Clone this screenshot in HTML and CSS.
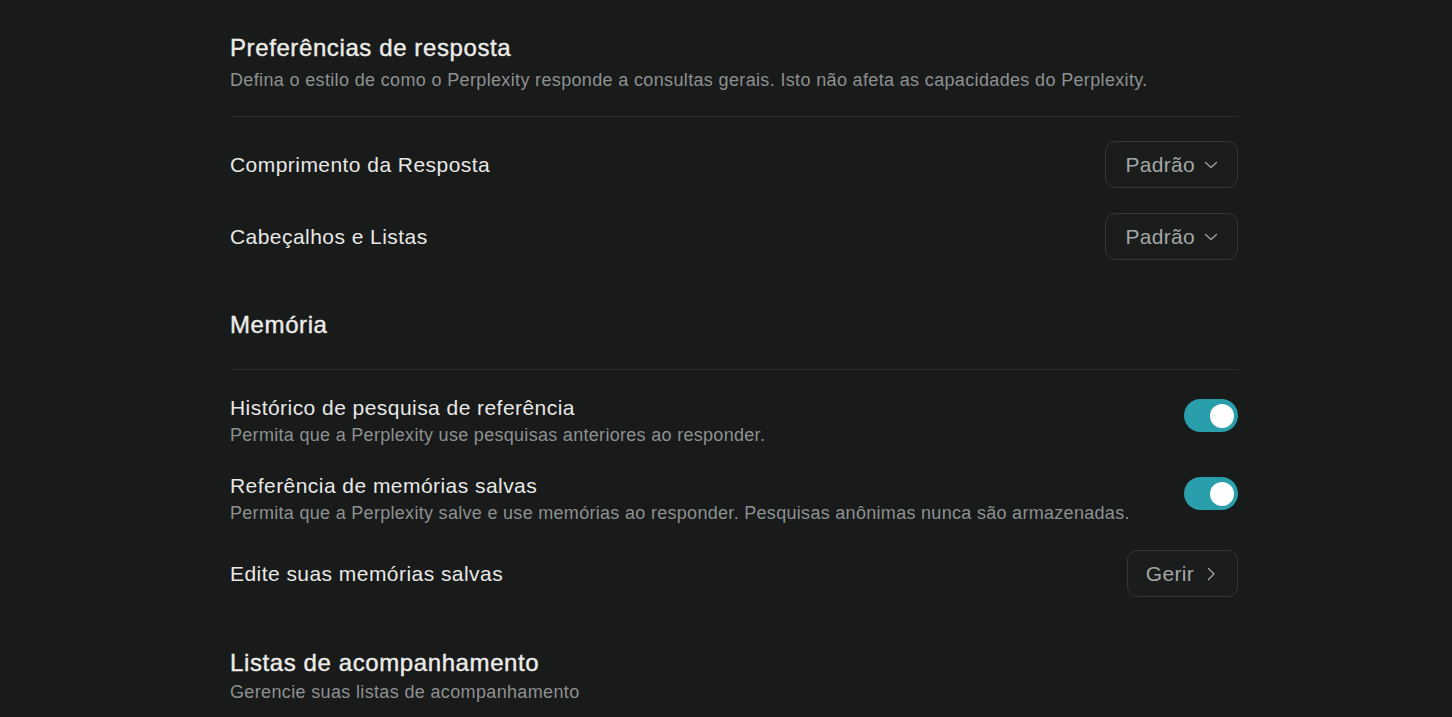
FILE: index.html
```html
<!DOCTYPE html>
<html lang="pt">
<head>
<meta charset="utf-8">
<title>Configurações</title>
<link rel="stylesheet" href="styles.css">
</head>
<body>
<div id="contents">

  <div class="section-head">
    <h2 class="section-title">Preferências de resposta</h2>
    <p class="section-desc">Defina o estilo de como o Perplexity responde a consultas gerais. Isto não afeta as capacidades do Perplexity.</p>
  </div>
  <hr class="divider">

  <div class="row">
    <div class="row-label">Comprimento da Resposta</div>
    <button class="pill">Padrão
      <svg class="chev" viewBox="0 0 14 14" width="14" height="14"><path d="M1.5 4.5l5.5 5 5.5-5" fill="none" stroke="currentColor" stroke-width="1.2" stroke-linecap="round" stroke-linejoin="round"/></svg>
    </button>
  </div>
  <div class="row">
    <div class="row-label">Cabeçalhos e Listas</div>
    <button class="pill">Padrão
      <svg class="chev" viewBox="0 0 14 14" width="14" height="14"><path d="M1.5 4.5l5.5 5 5.5-5" fill="none" stroke="currentColor" stroke-width="1.2" stroke-linecap="round" stroke-linejoin="round"/></svg>
    </button>
  </div>

  <div class="section-head mem-head">
    <h2 class="section-title">Memória</h2>
  </div>
  <hr class="divider divider-mem">

  <div class="row row-toggle">
    <div class="row-text">
      <div class="row-label">Histórico de pesquisa de referência</div>
      <div class="row-desc">Permita que a Perplexity use pesquisas anteriores ao responder.</div>
    </div>
    <span class="toggle"><span class="knob"></span></span>
  </div>
  <div class="row row-toggle row-toggle-last">
    <div class="row-text">
      <div class="row-label">Referência de memórias salvas</div>
      <div class="row-desc">Permita que a Perplexity salve e use memórias ao responder. Pesquisas anônimas nunca são armazenadas.</div>
    </div>
    <span class="toggle"><span class="knob"></span></span>
  </div>
  <div class="row">
    <div class="row-label">Edite suas memórias salvas</div>
    <button class="pill pill-manage">Gerir
      <svg class="chev" viewBox="0 0 16 16" width="16" height="16"><path d="M5.5 2.5l5.5 5.5-5.5 5.5" fill="none" stroke="currentColor" stroke-width="1.3" stroke-linecap="round" stroke-linejoin="round"/></svg>
    </button>
  </div>

  <div class="section-head lists-head">
    <h2 class="section-title">Listas de acompanhamento</h2>
    <p class="section-desc">Gerencie suas listas de acompanhamento</p>
  </div>

</div>
</body>
</html>
```

FILE: styles.css
```css
html, body {
	margin: 0;
	background: #191a1a;
	height: 100%;
	overflow: hidden;
}
body {
	font-family: "Liberation Sans", Arial, sans-serif;
	color: #e8e8e6;
}
#contents {
	width: 1008px;
	margin-left: 230px;
	padding-top: 33px;
}
.section-head {
	display: flex;
	flex-direction: column;
	gap: 6px;
}
.section-title {
	margin: 0;
	font-size: 24px;
	font-weight: normal;
	letter-spacing: 0.6px;
	line-height: 30px;
	color: #ecece9;
	-webkit-text-stroke: 0.4px #ecece9;
}
.section-desc {
	margin: 0;
	font-size: 18px;
	letter-spacing: 0.35px;
	line-height: 22px;
	color: #8d9191;
}
.divider {
	border: 0;
	border-top: 1px solid #2a2c2c;
	margin: 25px 0 24px;
}
.mem-head {
	margin-top: 50px;
}
.divider-mem {
	margin-top: 29px;
	margin-bottom: 26px;
}
.lists-head {
	margin-top: 51px;
	gap: 3px;
}
.row {
	display: flex;
	align-items: center;
	justify-content: space-between;
	margin-bottom: 25px;
}
.row-toggle {
	align-items: flex-start;
	margin-bottom: 28px;
}
.row-toggle-last {
	margin-bottom: 26px;
}
.row-text {
	display: flex;
	flex-direction: column;
	gap: 4px;
}
.row-label {
	font-size: 21px;
	letter-spacing: 0.45px;
	line-height: 24px;
}
.row-desc {
	font-size: 18px;
	letter-spacing: 0.3px;
	line-height: 22px;
	color: #8d9191;
}
.pill {
	display: flex;
	align-items: center;
	gap: 9px;
	height: 47px;
	padding: 0 19px 0 19px;
	background: #1b1c1c;
	border: 1px solid #343737;
	border-radius: 10px;
	color: #a3a6a6;
	font-family: "Liberation Sans", Arial, sans-serif;
	font-size: 21px;
	letter-spacing: 0.3px;
}
.pill-manage {
	gap: 9px;
	padding-left: 18px;
	padding-right: 18px;
}
.chev {
	color: #a3a6a6;
}
.toggle {
	display: flex;
	align-items: center;
	justify-content: flex-end;
	width: 54px;
	height: 33px;
	margin-top: 3px;
	padding: 0 4px;
	box-sizing: border-box;
	border-radius: 17px;
	background: #2a9fac;
}
.knob {
	width: 24px;
	height: 24px;
	border-radius: 50%;
	background: #ffffff;
}
```
